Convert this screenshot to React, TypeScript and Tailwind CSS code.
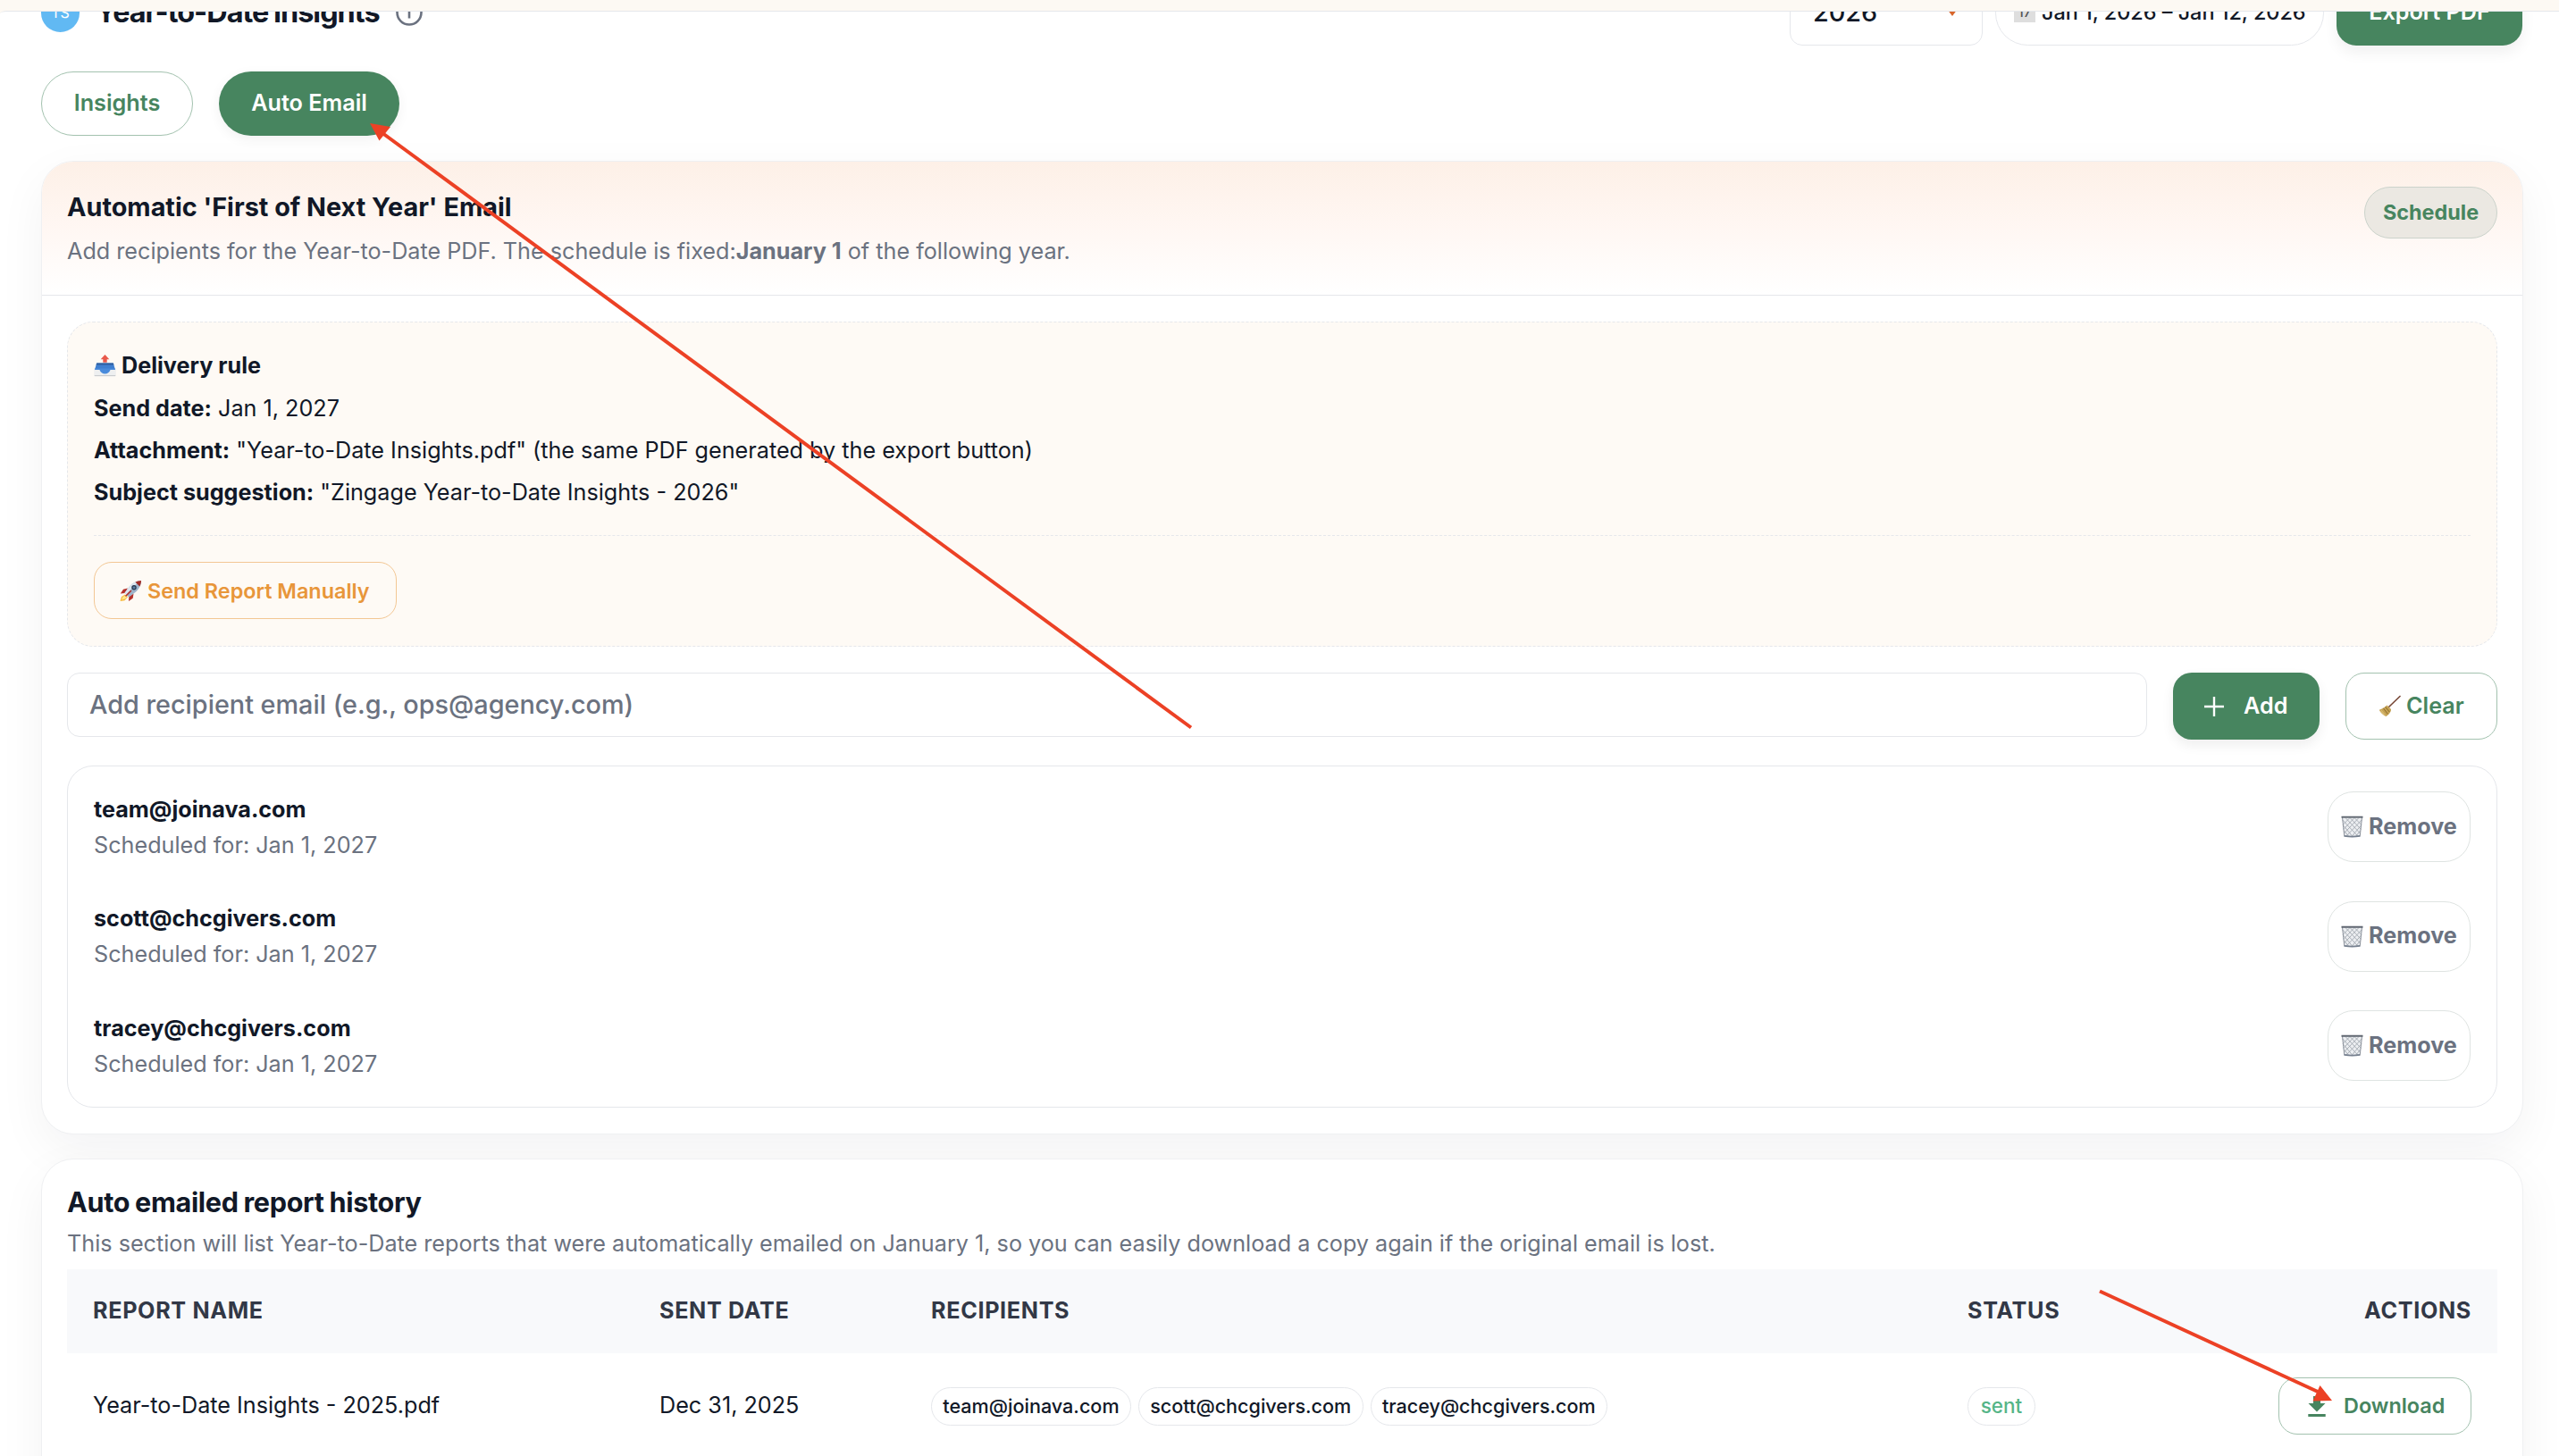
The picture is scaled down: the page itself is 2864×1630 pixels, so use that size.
const recipients = ["team@joinava.com", "scott@chcgivers.com", "tracey@chcgivers.com"];

function TrayIcon() {
  return (
    <svg viewBox="0 0 25 25" className="h-[25px] w-[25px] shrink-0">
      <path d="M3 10h19l2.500 7v6.500a1 1 0 0 1-1 1h-22a1 1 0 0 1-1-1V17z" fill="#e9eaec" />
      <path d="M3.200 9.500h18.600l2 7H1.200z" fill="#3f7fd0" />
      <path d="M3.200 9.500h18.600l.6 2H2.600z" fill="#2f5f9f" />
      <path d="M.8 16.500h23.400v7.300H.8z" fill="#eeeff0" />
      <path d="M1.200 15.500h22.600l.2 1.500h-5.500c-1 2.800-3.200 4.500-6 4.500s-5-1.700-6-4.500H1z" fill="#4a8bdb" />
      <path d="M.8 23.500h23.400" stroke="#c9cbce" strokeWidth="1" />
      <path d="M12.500 0l4.800 5.200h-2.600v3.600h-4.400V5.200H7.700z" fill="#e9594b" />
    </svg>
  );
}

function RocketIcon() {
  return (
    <svg viewBox="0 0 25 25" className="h-[25px] w-[25px] shrink-0">
      <path d="M6 16.500l-4 2.500-1.500 5 5-.8 3.500-4z" fill="#f6b93b" />
      <path d="M6.500 17.500l-3 1.500-1.500 3.500 4-1 2-2z" fill="#fde68a" />
      <path d="M9 9.500l-5 1.200L.8 15.500l5-.5z" fill="#b5322b" />
      <path d="M15.500 15.500l-.8 5.200L10 24l.3-5z" fill="#b5322b" />
      <path d="M24 1c-5 .2-9.500 2.500-13 6.500L5.500 14.800l4.700 4.700 7.300-5.500C21.500 10.500 24 6 24 1z" fill="#9db4cb" />
      <path d="M24 1c-5 .2-9.500 2.500-13 6.500L5.500 14.800l2 2C12 11 17 5.500 24 1z" fill="#dce6ef" />
      <path d="M24 1c-2.300.1-4.500.7-6.500 1.700l4.800 4.800C23.400 5.500 24 3.300 24 1z" fill="#a12d27" />
      <circle cx="16" cy="8.800" r="2.700" fill="#26364a" />
      <circle cx="16" cy="8.800" r="1.500" fill="#5a7da3" />
      <path d="M12.500 12.500L7 18" stroke="#b5322b" strokeWidth="1.600" strokeLinecap="round" />
    </svg>
  );
}

function BroomIcon() {
  return (
    <svg viewBox="0 0 25 25" className="h-[25px] w-[25px] shrink-0">
      <path d="M24 1.500L11.500 13.500" stroke="#7a4a3a" strokeWidth="1.700" strokeLinecap="round" />
      <path d="M9.500 11.500l4.500 4.500c.3 2-1.500 5.500-5.500 8C5.500 23 2 19.500.8 16.800 4 15.800 7 13.800 9.500 11.500z" fill="#c5a253" />
      <path d="M7.500 13.200l4.800 5.800M5.300 14.700l5 6.600" stroke="#8b6a2c" strokeWidth="1" />
      <path d="M3 17l4.500 5.500M1.800 17.500l4 4.300" stroke="#ddc27c" strokeWidth=".9" />
    </svg>
  );
}

function TrashIcon() {
  return (
    <svg viewBox="0 0 25 25" className="h-[25px] w-[25px] shrink-0">
      <path d="M1.300 2h22.400L21.300 23.500q-8.800 1.500-17.600 0z" fill="#eceef1" />
      <path
        d="M1.800 5l17 18M5 2.500l16.500 17.500M10 2.500l12.500 13M15 2.500l8 8M3 11.500l10 12M3.300 17l6 7M23.200 5L6 23M20 2.500L3.300 20M15 2.500L2.800 15.500M10 2.500L2 10.500M22 11.500L12 23.500M21.600 17l-5.600 7"
        stroke="#9ba1aa"
        strokeWidth=".8"
        fill="none"
      />
      <path d="M1.500 2l2.300 21.500M23.500 2l-2.300 21.500" stroke="#8b919b" strokeWidth="1" />
      <path d="M3.800 22.800q8.700 1.600 17.400 0" stroke="#76808f" strokeWidth="1.800" fill="none" />
      <path d="M.5 1.700h24" stroke="#5f6670" strokeWidth="1.900" />
    </svg>
  );
}

function DownloadIcon() {
  return (
    <svg viewBox="0 0 20 23" className="h-[23px] w-[20px] shrink-0" fill="#47855f">
      <path d="M6 0h8v8h5.500L10 17.500.5 8H6zM.3 20h19.400v3H.3z" />
    </svg>
  );
}

function Arrow({ className, w, h, line, head }: { className: string; w: number; h: number; line: string; head: string }) {
  return (
    <svg className={className} width={w} height={h} viewBox={`0 0 ${w} ${h}`}>
      <path d={line} stroke="#ec4125" strokeWidth="4" />
      <path d={head} fill="#ec4125" />
    </svg>
  );
}

export default function App() {
  return (
    <div className="relative h-[1630px] w-[2864px] overflow-hidden bg-[#fdf9f3] pt-[12px] font-['Inter',sans-serif] text-[25.2px] text-[#111827]">
      <main className="h-[1618px] overflow-hidden border-t border-[#e5e7eb] bg-white px-[46px] [border-top-left-radius:8px_3px]">
        <header className="-mt-[37px] -mr-[5px] flex h-[76px] items-center">
          <div className="flex h-[43px] w-[43px] items-center justify-center rounded-full bg-[#61b9f3] text-[16px] text-white">TS</div>
          <h1 className="ml-[18px] text-[32.4px] font-bold tracking-[-1px] [word-spacing:-1px]">Year-to-Date Insights</h1>
          <svg viewBox="0 0 30 30" className="ml-[18px] h-[30px] w-[30px]" fill="none" stroke="#6b7280" strokeWidth="2.6">
            <circle cx="15" cy="15" r="13.5" />
            <path d="M15 13.500v8M15 7.500v3" />
          </svg>
          <div className="ml-auto flex items-center">
            <div className="flex h-[74px] w-[216px] items-center justify-between rounded-[14px] border border-[#e5e7eb] pr-[27px] pl-[25px] text-[28.8px] font-medium">
              <span>2026</span>
              <span className="h-0 w-0 border-x-[6px] border-t-[8px] border-x-transparent border-t-[#d9662b]" />
            </div>
            <div className="ml-[14px] flex h-[73px] w-[368px] items-center rounded-full border border-[#e5e7eb] pl-[20px] text-[23.4px] font-medium">
              <span className="flex h-[22px] w-[24px] items-center justify-center bg-[#dedede] text-[15px] text-[#555]">17</span>
              <span className="ml-[7px]">Jan 1, 2026 – Jan 12, 2026</span>
            </div>
            <div className="ml-[14px] flex h-[73px] w-[208px] items-center justify-center rounded-[22px] bg-[#47855f] font-semibold text-white shadow-[0_8px_16px_rgba(0,0,0,0.06)]">
              Export PDF
            </div>
          </div>
        </header>

        <nav className="mt-[28px] flex gap-[29px] font-semibold">
          <button className="h-[72px] w-[170px] rounded-full border border-[#a3c2af] text-[#47855f]">Insights</button>
          <button className="h-[72px] w-[202px] rounded-full bg-[#47855f] text-white shadow-[0_4px_14px_rgba(0,0,0,0.06)]">Auto Email</button>
        </nav>

        <section className="mt-[28px] w-[2778px] overflow-hidden rounded-[36px] border border-[#eff0f2] bg-white shadow-[0_18px_54px_rgba(17,24,39,0.05)]">
          <div className="flex h-[150px] justify-between border-b border-[#e5e7eb] bg-linear-to-b from-[#fdf0e7] via-[#fff7f3] to-white px-[28px] pt-[28px]">
            <div className="pt-px">
              <h2 className="text-[28.8px] leading-[43px] font-bold">Automatic 'First of Next Year' Email</h2>
              <p className="mt-[10px] leading-[37px] text-[#6b7280]">
                Add recipients for the Year-to-Date PDF. The schedule is fixed:<b className="font-bold">January 1</b> of the following year.
              </p>
            </div>
            <div className="flex h-[58px] w-[149px] items-center justify-center rounded-full border border-[#cbd3cb] bg-[#ebe8e2] text-[23.4px] font-bold text-[#47855f]">
              Schedule
            </div>
          </div>

          <div className="px-[28px] pt-[29px] pb-[29px]">
            <div className="h-[364px] rounded-[29px] border border-dashed border-[#e5e7eb] bg-[#fefaf5] px-[29px] pt-[25px] leading-[47px]">
              <div className="mb-px flex items-center gap-[6px] font-bold">
                <TrayIcon />
                <span>Delivery rule</span>
              </div>
              <p><b className="font-bold">Send date:</b> Jan 1, 2027</p>
              <p><b className="font-bold">Attachment:</b> "Year-to-Date Insights.pdf" (the same PDF generated by the export button)</p>
              <p><b className="font-bold">Subject suggestion:</b> "Zingage Year-to-Date Insights - 2026"</p>
              <div className="mt-[24px] border-t border-dashed border-[#e5e7eb] pt-[29px]">
                <button className="flex h-[64px] w-[339px] items-center gap-[6px] rounded-[20px] border border-[#f3c794] pl-[28px] text-[23.4px] font-semibold text-[#e8963a]">
                  <RocketIcon />
                  <span>Send Report Manually</span>
                </button>
              </div>
            </div>

            <div className="mt-[29px] flex items-start gap-[29px]">
              <div className="flex h-[72px] flex-1 items-center rounded-[14px] border border-[#e5e7eb] px-[24px] text-[28.8px] font-medium text-[#6b7280]">
                Add recipient email (e.g., ops@agency.com)
              </div>
              <button className="flex h-[75px] w-[164px] items-center rounded-[21px] bg-[#47855f] pl-[35px] font-semibold text-white shadow-[0_6px_14px_rgba(0,0,0,0.07)]">
                <svg viewBox="0 0 22 22" className="mr-[22px] h-[22px] w-[22px]" stroke="white" strokeWidth="2.4">
                  <path d="M11 0v22M0 11h22" />
                </svg>
                Add
              </button>
              <button className="flex h-[75px] w-[170px] items-center gap-[6px] rounded-[21px] border border-[#a3c2af] pl-[36px] font-semibold text-[#47855f]">
                <BroomIcon />
                Clear
              </button>
            </div>

            <div className="mt-[29px] flex h-[383px] flex-col gap-[43.5px] rounded-[29px] border border-[#e5e7eb] px-[29px] pt-[28px]">
              {recipients.map((email) => (
                <div key={email} className="flex h-[79px] items-center justify-between">
                  <div className="leading-[40px]">
                    <div className="font-bold">{email}</div>
                    <div className="text-[#6b7280]">Scheduled for: Jan 1, 2027</div>
                  </div>
                  <button className="flex h-[79px] w-[160px] items-center gap-[6px] rounded-[29px] border border-[#dfe4e2] pl-[14px] font-bold text-[#6b7280]">
                    <TrashIcon />
                    Remove
                  </button>
                </div>
              ))}
            </div>
          </div>
        </section>

        <section className="mt-[27px] h-[400px] w-[2778px] rounded-[36px] border border-[#eff0f2] bg-white px-[28px] pt-[26px] shadow-[0_18px_54px_rgba(17,24,39,0.05)]">
          <h2 className="text-[30.6px] leading-[43px] font-bold tracking-[-0.35px] [word-spacing:-1px]">Auto emailed report history</h2>
          <p className="mt-[6px] leading-[38px] text-[#6b7280]">
            This section will list Year-to-Date reports that were automatically emailed on January 1, so you can easily download a copy again if the original email is lost.
          </p>
          <div className="mt-[10px] grid h-[94px] grid-cols-[634px_304px_1160px_1fr_auto] items-center bg-[#f8f9fb] px-[29px] font-bold tracking-[0.65px] text-[#323846]">
            <span>REPORT NAME</span>
            <span>SENT DATE</span>
            <span>RECIPIENTS</span>
            <span>STATUS</span>
            <span>ACTIONS</span>
          </div>
          <div className="grid h-[118px] grid-cols-[634px_304px_1160px_1fr_auto] items-center px-[29px]">
            <span>Year-to-Date Insights - 2025.pdf</span>
            <span>Dec 31, 2025</span>
            <div className="flex gap-[8px] text-[21.6px] font-medium">
              {recipients.map((email) => (
                <span key={email} className="flex h-[43px] items-center rounded-full border border-[#e5e7eb] px-[12.3px]">{email}</span>
              ))}
            </div>
            <div>
              <span className="flex h-[43px] w-[76px] items-center justify-center rounded-full border border-[#e5e7eb] text-[22.5px] font-medium text-[#55b587]">sent</span>
            </div>
            <button className="flex h-[64px] w-[216px] items-center rounded-[21px] border border-[#a3c2af] pl-[32px] text-[23.4px] font-semibold text-[#47855f]">
              <DownloadIcon />
              <span className="ml-[20px]">Download</span>
            </button>
          </div>
        </section>
      </main>

      <Arrow className="absolute top-[130px] left-[410px]" w={940} h={700} line="M14 16L923 684.500" head="M4 8L27 12L14.500 27.500Z" />
      <Arrow className="absolute top-[1436px] left-[2340px]" w={290} h={150} line="M10 9.500L254 122" head="M270 132L256.500 115L248.500 132.500Z" />
    </div>
  );
}
